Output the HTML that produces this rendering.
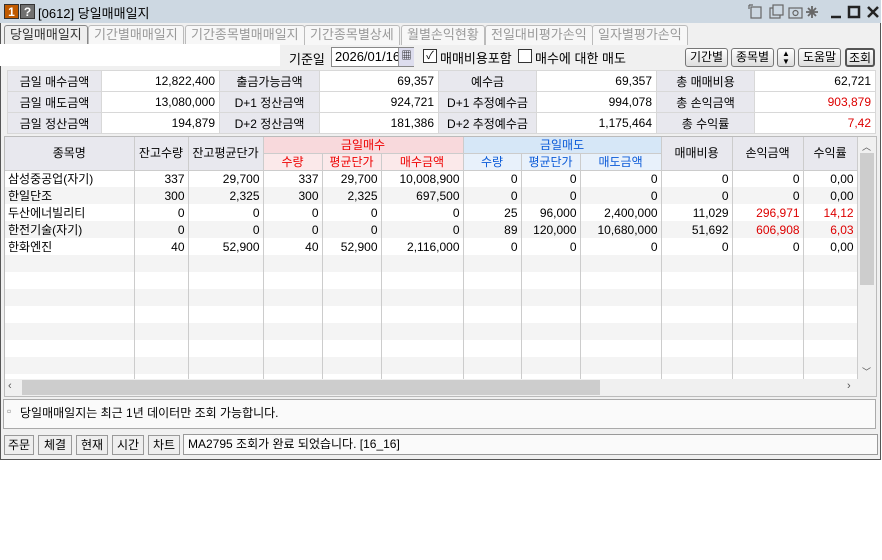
<!DOCTYPE html>
<html><head><meta charset="utf-8"><style>
*{margin:0;padding:0;box-sizing:border-box}
body{width:882px;height:560px;background:#fff;font-family:"Liberation Sans","Noto Sans CJK KR",sans-serif;font-size:12px;color:#000;position:relative;overflow:hidden}
.a{position:absolute}
#win{left:0;top:0;width:881px;height:460px;border:1px solid #555;background:#f0f0f0}
#title{left:0;top:0;width:881px;height:23px;background:#cdd8e2}
.tab{position:absolute;top:25px;height:20px;border:1px solid #bbb;border-bottom:none;border-radius:3px 3px 0 0;background:#f7f7f7;color:#999;font-size:13px;line-height:18px;padding:0 5px}
table{border-collapse:collapse;table-layout:fixed}
#sum td{height:21px;border:1px solid #d8d8d8;padding:0 4px;font-size:12px}
#sum .l{background:#e8e8ee;text-align:center}
#sum .v{background:#fff;text-align:right}
#grid td{height:17px;border-right:1px solid #ccc;padding:0 3px;text-align:right;font-size:12px;line-height:16px;overflow:hidden;white-space:nowrap}
#grid th{font-weight:normal;border-right:1px solid #ccc;border-bottom:1px solid #ccc;font-size:12px;line-height:14px;padding:0;overflow:hidden;white-space:nowrap}
.red{color:#d00}.blue{color:#0a5ad8}
.btn{position:absolute;height:19px;border:1px solid #777;border-radius:3px;background:linear-gradient(#fff,#ddd);font-size:12px;line-height:17px;text-align:center}
.sb{position:absolute;height:20px;top:435px;border:1px solid #999;background:#eee;font-size:12px;line-height:18px;text-align:center}
</style></head><body>
<div id="win" class="a"></div>
<div id="title" class="a"></div>
<div class="a" style="left:4px;top:4px;width:15px;height:15px;background:#c05a00;color:#fff;font-weight:bold;font-size:12px;text-align:center;line-height:15px;border:1px solid #333">1</div>
<div class="a" style="left:20px;top:4px;width:15px;height:15px;background:#707070;color:#fff;font-weight:bold;font-size:12px;text-align:center;line-height:15px;border:1px solid #333">?</div>
<div class="a" style="left:38px;top:3px;font-size:13px">[0612] 당일매매일지</div>
<svg class="a" style="left:748px;top:4px" width="134" height="16" viewBox="0 0 134 16" fill="none" stroke="#666" stroke-width="1.2">
<rect x="3" y="3" width="10" height="11"/><path d="M1 1h4M1 1v4"/>
<rect x="22" y="4" width="10" height="10"/><rect x="25" y="1" width="10" height="10" fill="#cdd8e2"/>
<rect x="41" y="4" width="13" height="10"/><circle cx="47.5" cy="9" r="2.5"/>
<path d="M64 2v12M58 8h12M60 4l8 8M68 4l-8 8" stroke-width="1.8"/>
<path d="M83 13h10" stroke="#222" stroke-width="2.5"/>
<rect x="101" y="3" width="10" height="10" stroke="#222" stroke-width="2.5"/>
<path d="M120 3l10 10M130 3l-10 10" stroke="#222" stroke-width="2.5"/>
</svg>
<div class="tab" style="left:4px;background:#eee;color:#333;border-color:#888">당일매매일지</div>
<div class="tab" style="left:88px">기간별매매일지</div>
<div class="tab" style="left:185px">기간종목별매매일지</div>
<div class="tab" style="left:304px">기간종목별상세</div>
<div class="tab" style="left:401px">월별손익현황</div>
<div class="tab" style="left:485px">전일대비평가손익</div>
<div class="tab" style="left:592px">일자별평가손익</div>
<div class="a" style="left:0;top:44px;width:280px;height:22px;background:#fff"></div>
<div class="a" style="left:289px;top:49px;font-size:13px">기준일</div>
<div class="a" style="left:331px;top:47px;width:83px;height:20px;border:1px solid #888;background:#fff;font-size:13px;line-height:18px;padding-left:3px;overflow:hidden">2026/01/16</div>
<div class="a" style="left:398px;top:48px;width:16px;height:18px;background:#dde;border-left:1px solid #999;font-size:10px;text-align:center;line-height:18px">▦</div>
<div class="a" style="left:423px;top:49px;width:14px;height:14px;border:1px solid #333;background:#fff;font-size:11px;line-height:12px;text-align:center">✓</div>
<div class="a" style="left:440px;top:48px;font-size:13px">매매비용포함</div>
<div class="a" style="left:518px;top:49px;width:14px;height:14px;border:1px solid #333;background:#fff"></div>
<div class="a" style="left:535px;top:48px;font-size:13px">매수에 대한 매도</div>
<div class="btn" style="left:685px;top:48px;width:43px">기간별</div>
<div class="btn" style="left:731px;top:48px;width:43px">종목별</div>
<div class="btn" style="left:777px;top:48px;width:18px;font-size:8px;line-height:8px;padding-top:1px">▲<br>▼</div>
<div class="btn" style="left:798px;top:48px;width:43px">도움말</div>
<div class="btn" style="left:845px;top:48px;width:30px;border:2px solid #555">조회</div>
<table id="sum" class="a" style="left:7px;top:70px;width:868px">
<colgroup><col style="width:94px"><col style="width:118px"><col style="width:100px"><col style="width:119px"><col style="width:98px"><col style="width:120px"><col style="width:98px"><col style="width:121px"></colgroup>
<tr><td class="l">금일 매수금액</td><td class="v">12,822,400</td><td class="l">출금가능금액</td><td class="v">69,357</td><td class="l">예수금</td><td class="v">69,357</td><td class="l">총 매매비용</td><td class="v">62,721</td></tr>
<tr><td class="l">금일 매도금액</td><td class="v">13,080,000</td><td class="l">D+1 정산금액</td><td class="v">924,721</td><td class="l">D+1 추정예수금</td><td class="v">994,078</td><td class="l">총 손익금액</td><td class="v red">903,879</td></tr>
<tr><td class="l">금일 정산금액</td><td class="v">194,879</td><td class="l">D+2 정산금액</td><td class="v">181,386</td><td class="l">D+2 추정예수금</td><td class="v">1,175,464</td><td class="l">총 수익률</td><td class="v red">7,42</td></tr>
</table>
<div class="a" style="left:4px;top:136px;width:873px;height:261px;background:#fff;border:1px solid #bbb"></div>
<table id="grid" class="a" style="left:5px;top:137px;width:852px">
<colgroup><col style="width:129px"><col style="width:54px"><col style="width:75px"><col style="width:59px"><col style="width:59px"><col style="width:82px"><col style="width:58px"><col style="width:59px"><col style="width:81px"><col style="width:71px"><col style="width:71px"><col style="width:54px"></colgroup>
<tr><th rowspan="2" style="background:#e8e8ee;height:33px">종목명</th><th rowspan="2" style="background:#e8e8ee">잔고수량</th><th rowspan="2" style="background:#e8e8ee">잔고평균단가</th><th colspan="3" style="background:#f8d9dc;color:#e00;height:16px">금일매수</th><th colspan="3" style="background:#d6e7f7;color:#0a5ad8">금일매도</th><th rowspan="2" style="background:#e8e8ee">매매비용</th><th rowspan="2" style="background:#e8e8ee">손익금액</th><th rowspan="2" style="background:#e8e8ee">수익률</th></tr>
<tr><th style="background:#fbe9ea;color:#e00;height:17px">수량</th><th style="background:#fbe9ea;color:#e00">평균단가</th><th style="background:#fbe9ea;color:#e00">매수금액</th><th style="background:#e8f1fb" class="blue">수량</th><th style="background:#e8f1fb" class="blue">평균단가</th><th style="background:#e8f1fb" class="blue">매도금액</th></tr>
<tr><td style="text-align:left">삼성중공업(자기)</td><td>337</td><td>29,700</td><td>337</td><td>29,700</td><td>10,008,900</td><td>0</td><td>0</td><td>0</td><td>0</td><td>0</td><td>0,00</td></tr>
<tr style="background:#f4f4f4"><td style="text-align:left">한일단조</td><td>300</td><td>2,325</td><td>300</td><td>2,325</td><td>697,500</td><td>0</td><td>0</td><td>0</td><td>0</td><td>0</td><td>0,00</td></tr>
<tr><td style="text-align:left">두산에너빌리티</td><td>0</td><td>0</td><td>0</td><td>0</td><td>0</td><td>25</td><td>96,000</td><td>2,400,000</td><td>11,029</td><td class="red">296,971</td><td class="red">14,12</td></tr>
<tr style="background:#f4f4f4"><td style="text-align:left">한전기술(자기)</td><td>0</td><td>0</td><td>0</td><td>0</td><td>0</td><td>89</td><td>120,000</td><td>10,680,000</td><td>51,692</td><td class="red">606,908</td><td class="red">6,03</td></tr>
<tr><td style="text-align:left">한화엔진</td><td>40</td><td>52,900</td><td>40</td><td>52,900</td><td>2,116,000</td><td>0</td><td>0</td><td>0</td><td>0</td><td>0</td><td>0,00</td></tr>
<tr style="background:#f4f4f4"><td></td><td></td><td></td><td></td><td></td><td></td><td></td><td></td><td></td><td></td><td></td><td></td></tr>
<tr><td></td><td></td><td></td><td></td><td></td><td></td><td></td><td></td><td></td><td></td><td></td><td></td></tr>
<tr style="background:#f4f4f4"><td></td><td></td><td></td><td></td><td></td><td></td><td></td><td></td><td></td><td></td><td></td><td></td></tr>
<tr><td></td><td></td><td></td><td></td><td></td><td></td><td></td><td></td><td></td><td></td><td></td><td></td></tr>
<tr style="background:#f4f4f4"><td></td><td></td><td></td><td></td><td></td><td></td><td></td><td></td><td></td><td></td><td></td><td></td></tr>
<tr><td></td><td></td><td></td><td></td><td></td><td></td><td></td><td></td><td></td><td></td><td></td><td></td></tr>
<tr style="background:#f4f4f4"><td></td><td></td><td></td><td></td><td></td><td></td><td></td><td></td><td></td><td></td><td></td><td></td></tr>
<tr><td></td><td></td><td></td><td></td><td></td><td></td><td></td><td></td><td></td><td></td><td></td><td></td></tr>
</table>
<div class="a" style="left:858px;top:137px;width:18px;height:242px;background:#f0f0f0"></div>
<div class="a" style="left:860px;top:153px;width:14px;height:132px;background:#cdcdcd"></div>
<div class="a" style="left:862px;top:140px;font-size:9px;color:#555">︿</div>
<div class="a" style="left:862px;top:365px;font-size:9px;color:#555">﹀</div>
<div class="a" style="left:5px;top:379px;width:871px;height:17px;background:#f0f0f0"></div>
<div class="a" style="left:22px;top:380px;width:578px;height:15px;background:#cdcdcd"></div>
<div class="a" style="left:8px;top:380px;font-size:11px;color:#555">‹</div>
<div class="a" style="left:847px;top:380px;font-size:11px;color:#555">›</div>
<div class="a" style="left:3px;top:399px;width:873px;height:30px;background:#fafafa;border:1px solid #aaa"></div>
<div class="a" style="left:7px;top:404px;font-size:12px;color:#888">▫</div>
<div class="a" style="left:20px;top:404px;font-size:12px">당일매매일지는 최근 1년 데이터만 조회 가능합니다.</div>
<div class="sb" style="left:4px;width:30px">주문</div>
<div class="sb" style="left:38px;width:34px">체결</div>
<div class="sb" style="left:76px;width:32px">현재</div>
<div class="sb" style="left:112px;width:32px">시간</div>
<div class="sb" style="left:148px;width:32px">차트</div>
<div class="a" style="left:183px;top:434px;width:695px;height:21px;background:#fafafa;border:1px solid #999;padding-left:4px;font-size:12px;line-height:19px">MA2795 조회가 완료 되었습니다. [16_16]</div>
</body></html>
